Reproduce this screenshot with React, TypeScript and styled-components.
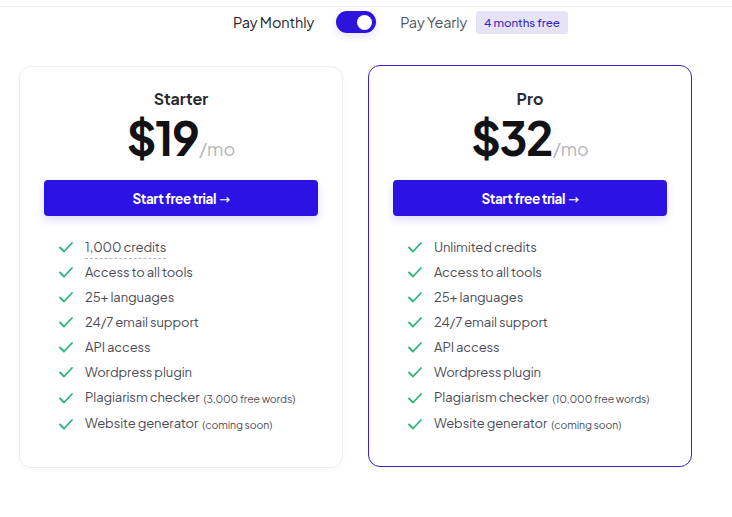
import React from 'react';
import styled, { createGlobalStyle } from 'styled-components';

const Global = createGlobalStyle`
  body {
    margin: 0;
    background: #ffffff;
    font-family: "Plus Jakarta Sans", Inter, "Noto Sans", sans-serif;
    color: #1a1a22;
  }
`

const Page = styled.div`
  width: 732px;
  height: 517px;
  overflow: hidden;
  border-top: 1px solid #ececee;
  margin-top: 6px;
  box-sizing: border-box;
`

const Switcher = styled.div`
  display: flex;
  align-items: center;
  height: 30px;
  padding-left: 233px;
`

const Label = styled.span<{ $muted?: boolean }>`
  font-size: 14.5px;
  color: ${p => (p.$muted ? '#55555f' : '#222229')};
  letter-spacing: -0.1px;
`

const Toggle = styled.div`
  width: 40px;
  height: 22px;
  border-radius: 11px;
  background: #2d14dc;
  margin: 0 24px 0 22px;
  display: flex;
  align-items: center;
  justify-content: flex-end;
  padding: 0 4px;
  box-sizing: border-box;
  box-shadow: 0 3px 8px rgba(45, 20, 220, 0.12);
`

const Knob = styled.div`
  width: 15px;
  height: 15px;
  border-radius: 50%;
  background: #fff;
`

const Badge = styled.span`
  margin-left: 9px;
  background: #e6e3f6;
  color: #3a27c9;
  font-size: 11.5px;
  font-weight: 500;
  padding: 4px 8px;
  border-radius: 3px;
`

const Cards = styled.div`
  display: flex;
  gap: 25px;
  padding: 29px 0 0 19px;
`

const Card = styled.div<{ $featured?: boolean }>`
  width: 324px;
  height: 402px;
  box-sizing: border-box;
  border: 1px solid ${p => (p.$featured ? '#3a22cc' : '#ececf1')};
  border-radius: 12px;
  margin-top: ${p => (p.$featured ? '-1px' : '0')};
  padding: ${p => (p.$featured ? '23px' : '22px')} 24px 0;
  display: flex;
  flex-direction: column;
  align-items: center;
  box-shadow: ${p => (p.$featured ? 'none' : '0 2px 6px rgba(20, 20, 40, 0.03)')};
`

const PlanName = styled.div`
  font-size: 16px;
  font-weight: 700;
  color: #2a2a33;
  line-height: 20px;
`

const Price = styled.div`
  display: flex;
  align-items: baseline;
  margin-top: 3px;
  line-height: 50px;
`

const Amount = styled.span`
  font-size: 46px;
  font-weight: 700;
  letter-spacing: -1.5px;
  color: #111116;
`

const Per = styled.span`
  font-size: 18px;
  color: #b4b4bc;
  margin-left: 1px;
`

const Button = styled.button`
  width: 100%;
  height: 36px;
  margin-top: 6px;
  border: none;
  border-radius: 4px;
  background: #2d13e3;
  color: #fff;
  font-family: inherit;
  font-size: 13.5px;
  font-weight: 700;
  letter-spacing: -0.4px;
  box-shadow: 0 4px 8px rgba(45, 19, 227, 0.15);
`

const Arrow = styled.span`
  font-family: "DejaVu Sans", sans-serif;
  font-weight: 400;
  font-size: 13px;
  margin-left: 3px;
`

const Features = styled.ul`
  list-style: none;
  margin: 22px 0 0;
  padding: 0 0 0 14px;
  align-self: stretch;
  display: flex;
  flex-direction: column;
  gap: 6.5px;
`

const Feature = styled.li`
  display: flex;
  align-items: center;
  gap: 11px;
  font-size: 13px;
  color: #4b4b56;
  line-height: 18.5px;
  letter-spacing: -0.1px;
`

const Dashed = styled.span`
  border-bottom: 1px dashed #b8b8c0;
  padding-bottom: 3px;
  margin-bottom: -4px;
`

const Note = styled.span`
  font-size: 10.5px;
  margin-left: 4px;
  position: relative;
  top: 1px;
`

const Check = () => (
  <svg width="16" height="16" viewBox="0 0 16 16" fill="none">
    <path d="M2 8.5 L6 12.5 L14 4" stroke="#2bb57a" strokeWidth="1.8" strokeLinecap="round" strokeLinejoin="round" />
  </svg>
)

type Item = { text: string; note?: string; dashed?: boolean }

const plans: { name: string; price: string; featured?: boolean; items: Item[] }[] = [
  {
    name: 'Starter',
    price: '$19',
    items: [
      { text: '1,000 credits', dashed: true },
      { text: 'Access to all tools' },
      { text: '25+ languages' },
      { text: '24/7 email support' },
      { text: 'API access' },
      { text: 'Wordpress plugin' },
      { text: 'Plagiarism checker', note: '(3,000 free words)' },
      { text: 'Website generator', note: '(coming soon)' },
    ],
  },
  {
    name: 'Pro',
    price: '$32',
    featured: true,
    items: [
      { text: 'Unlimited credits' },
      { text: 'Access to all tools' },
      { text: '25+ languages' },
      { text: '24/7 email support' },
      { text: 'API access' },
      { text: 'Wordpress plugin' },
      { text: 'Plagiarism checker', note: '(10,000 free words)' },
      { text: 'Website generator', note: '(coming soon)' },
    ],
  },
]

export default function App() {
  return (
    <Page>
      <Global />
      <Switcher>
        <Label>Pay Monthly</Label>
        <Toggle>
          <Knob />
        </Toggle>
        <Label $muted>Pay Yearly</Label>
        <Badge>4 months free</Badge>
      </Switcher>
      <Cards>
        {plans.map(plan => (
          <Card key={plan.name} $featured={plan.featured}>
            <PlanName>{plan.name}</PlanName>
            <Price>
              <Amount>{plan.price}</Amount>
              <Per>/mo</Per>
            </Price>
            <Button>
              Start free trial<Arrow>→</Arrow>
            </Button>
            <Features>
              {plan.items.map(item => (
                <Feature key={item.text}>
                  <Check />
                  <span>
                    {item.dashed ? <Dashed>{item.text}</Dashed> : item.text}
                    {item.note && <Note>{item.note}</Note>}
                  </span>
                </Feature>
              ))}
            </Features>
          </Card>
        ))}
      </Cards>
    </Page>
  )
}
